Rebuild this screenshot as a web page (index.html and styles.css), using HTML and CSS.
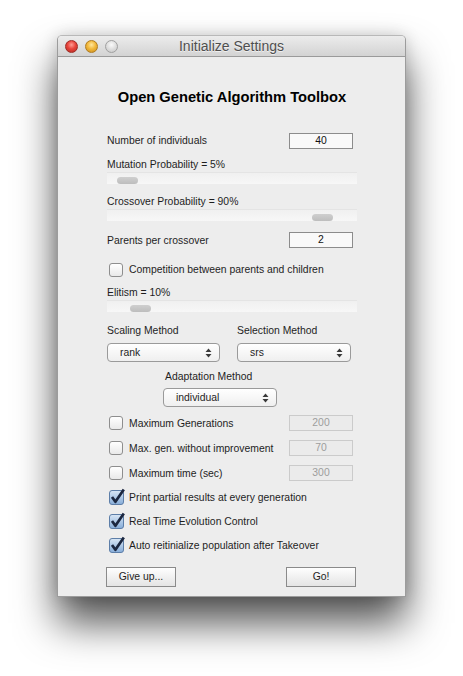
FILE: index.html
```html
<!DOCTYPE html>
<html>
<head>
<meta charset="utf-8">
<title>Initialize Settings</title>
<link rel="stylesheet" href="styles.css">
</head>
<body>
<div class="window">
  <div class="titlebar">
    <div class="lights">
      <span class="light red"></span>
      <span class="light yellow"></span>
      <span class="light gray"></span>
    </div>
    <div class="title">Initialize Settings</div>
    <div></div>
  </div>
  <div class="content">
    <h1 class="heading">Open Genetic Algorithm Toolbox</h1>

    <div class="field-row mt-26">
      <span class="label raised">Number of individuals</span>
      <div class="numbox">40</div>
    </div>

    <div class="label line mt-9">Mutation Probability = 5%</div>
    <div class="slider"><span class="knob" style="margin-left:10px"></span></div>

    <div class="label line mt-11">Crossover Probability = 90%</div>
    <div class="slider"><span class="knob" style="margin-left:205px"></span></div>

    <div class="field-row mt-11">
      <span class="label">Parents per crossover</span>
      <div class="numbox">2</div>
    </div>

    <div class="check-row mt-14">
      <span class="checkbox"></span>
      <span class="label raised">Competition between parents and children</span>
    </div>

    <div class="label line mt-8">Elitism = 10%</div>
    <div class="slider"><span class="knob" style="margin-left:23px"></span></div>

    <div class="methods mt-12">
      <div class="method">
        <div class="label line">Scaling Method</div>
        <div class="select"><span>rank</span>
          <svg class="arrows" width="7" height="10" viewBox="0 0 7 10"><path d="M3.5 0.5 L6.5 4 L0.5 4 Z M3.5 9.5 L6.5 6 L0.5 6 Z" fill="#3a3a3a"/></svg>
        </div>
      </div>
      <div class="method">
        <div class="label line">Selection Method</div>
        <div class="select"><span>srs</span>
          <svg class="arrows" width="7" height="10" viewBox="0 0 7 10"><path d="M3.5 0.5 L6.5 4 L0.5 4 Z M3.5 9.5 L6.5 6 L0.5 6 Z" fill="#3a3a3a"/></svg>
        </div>
      </div>
    </div>

    <div class="method adapt mt-8">
      <div class="label line indent">Adaptation Method</div>
      <div class="select"><span>individual</span>
        <svg class="arrows" width="7" height="10" viewBox="0 0 7 10"><path d="M3.5 0.5 L6.5 4 L0.5 4 Z M3.5 9.5 L6.5 6 L0.5 6 Z" fill="#3a3a3a"/></svg>
      </div>
    </div>

    <div class="field-row mt-8">
      <div class="check-row">
        <span class="checkbox"></span>
        <span class="label">Maximum Generations</span>
      </div>
      <div class="numbox disabled">200</div>
    </div>

    <div class="field-row mt-9">
      <div class="check-row">
        <span class="checkbox"></span>
        <span class="label">Max. gen. without improvement</span>
      </div>
      <div class="numbox disabled">70</div>
    </div>

    <div class="field-row mt-9">
      <div class="check-row">
        <span class="checkbox"></span>
        <span class="label">Maximum time (sec)</span>
      </div>
      <div class="numbox disabled">300</div>
    </div>

    <div class="check-row tall mt-9">
      <svg class="checked" width="16" height="16" viewBox="0 0 16 16"><defs><linearGradient id="cb1" x1="0" y1="0" x2="0" y2="1"><stop offset="0" stop-color="#d9e7f6"/><stop offset="1" stop-color="#86acd8"/></linearGradient></defs><rect x="0.5" y="1.5" width="14" height="14" rx="2.5" fill="url(#cb1)" stroke="#5d7ea8"/><path d="M3 8 L6.4 12.8 L14.8 0.4" fill="none" stroke="#1b2740" stroke-width="2.7" stroke-linejoin="round"/></svg>
      <span class="label">Print partial results at every generation</span>
    </div>

    <div class="check-row tall mt-8">
      <svg class="checked" width="16" height="16" viewBox="0 0 16 16"><defs><linearGradient id="cb2" x1="0" y1="0" x2="0" y2="1"><stop offset="0" stop-color="#d9e7f6"/><stop offset="1" stop-color="#86acd8"/></linearGradient></defs><rect x="0.5" y="1.5" width="14" height="14" rx="2.5" fill="url(#cb2)" stroke="#5d7ea8"/><path d="M3 8 L6.4 12.8 L14.8 0.4" fill="none" stroke="#1b2740" stroke-width="2.7" stroke-linejoin="round"/></svg>
      <span class="label">Real Time Evolution Control</span>
    </div>

    <div class="check-row tall mt-8">
      <svg class="checked" width="16" height="16" viewBox="0 0 16 16"><defs><linearGradient id="cb3" x1="0" y1="0" x2="0" y2="1"><stop offset="0" stop-color="#d9e7f6"/><stop offset="1" stop-color="#86acd8"/></linearGradient></defs><rect x="0.5" y="1.5" width="14" height="14" rx="2.5" fill="url(#cb3)" stroke="#5d7ea8"/><path d="M3 8 L6.4 12.8 L14.8 0.4" fill="none" stroke="#1b2740" stroke-width="2.7" stroke-linejoin="round"/></svg>
      <span class="label">Auto reitinialize population after Takeover</span>
    </div>

    <div class="buttons mt-13">
      <div class="button">Give up...</div>
      <div class="button">Go!</div>
    </div>
  </div>
</div>
</body>
</html>
```

FILE: styles.css
```css
* { box-sizing: border-box; }

html, body {
  margin: 0;
  padding: 0;
  background: #ffffff;
}

body {
  min-height: 676px;
  padding-top: 35px;
  font-family: "Liberation Sans", Arial, sans-serif;
  color: #1e1e1e;
}

.window {
  margin: 0 0 0 57px;
  width: 349px;
  border: 1px solid #9c9c9c;
  border-top-color: #b8b8b8;
  border-radius: 5px 5px 0 0;
  background: #ededed;
  box-shadow: 0 26px 40px 0 rgba(0, 0, 0, 0.68), 0 0 16px rgba(0, 0, 0, 0.16);
}

.titlebar {
  height: 21px;
  display: grid;
  grid-template-columns: 1fr auto 1fr;
  align-items: center;
  background: linear-gradient(#ececec, #d3d3d3);
  border-bottom: 1px solid #9a9a9a;
  border-radius: 4px 4px 0 0;
}

.lights {
  display: flex;
  gap: 7px;
  padding-left: 7px;
  padding-top: 1px;
}

.light {
  width: 13px;
  height: 13px;
  border-radius: 50%;
  display: block;
}

.light.red {
  background: radial-gradient(circle at 50% 35%, #ff9d95 0%, #e8453c 45%, #b32a22 100%);
  border: 1px solid #9e2b25;
}

.light.yellow {
  background: radial-gradient(circle at 50% 35%, #ffe7a0 0%, #f2b93c 45%, #c98b1c 100%);
  border: 1px solid #b07c1f;
}

.light.gray {
  background: radial-gradient(circle at 50% 35%, #fafafa 0%, #dedede 50%, #c2c2c2 100%);
  border: 1px solid #a0a0a0;
}

.title {
  font-size: 14px;
  color: #4f4f4f;
  line-height: 20px;
  text-shadow: 0 1px 0 rgba(255, 255, 255, 0.6);
}

.content {
  padding: 30px 48px 9px 49px;
  display: flex;
  flex-direction: column;
}

.heading {
  margin: 0;
  height: 20px;
  line-height: 20px;
  font-size: 14.7px;
  font-weight: bold;
  text-align: center;
  color: #000;
}

.label {
  font-size: 10.4px;
  color: #1e1e1e;
  white-space: nowrap;
}

.raised { margin-top: -2px; }

.line {
  height: 14px;
  line-height: 14px;
}

.indent { padding-left: 2px; }

.mt-7 { margin-top: 7px; }
.mt-8 { margin-top: 8px; }
.mt-9 { margin-top: 9px; }
.mt-11 { margin-top: 11px; }
.mt-12 { margin-top: 12px; }
.mt-13 { margin-top: 13px; }
.mt-14 { margin-top: 14px; }
.mt-26 { margin-top: 26px; }

.field-row {
  height: 16px;
  display: flex;
  justify-content: space-between;
  align-items: center;
}

.numbox {
  width: 64px;
  height: 16px;
  margin-right: 4px;
  border: 1px solid #8c8c8c;
  background: #f9f9f9;
  font-size: 10.4px;
  line-height: 14px;
  text-align: center;
  color: #111;
}

.numbox.disabled {
  border-color: #cbcbcb;
  background: #ebebeb;
  color: #9d9d9d;
}

.slider {
  height: 12px;
  padding-top: 4px;
  background: linear-gradient(#f0f0f0, #f7f7f7);
  border-top: 1px solid #e4e4e4;
}

.knob {
  display: block;
  width: 21px;
  height: 7px;
  border-radius: 4px;
  background: linear-gradient(#cfcfcf, #bdbdbd);
}

.check-row {
  height: 16px;
  display: flex;
  align-items: center;
  gap: 6px;
}

.checkbox {
  width: 14px;
  height: 14px;
  margin-left: 2px;
  border: 1px solid #8e8e8e;
  border-radius: 3px;
  background: linear-gradient(#ffffff, #e9e9e9);
  flex: none;
}

.checked {
  margin-left: 2px;
  margin-right: -2px;
  margin-top: -2px;
  overflow: visible;
  flex: none;
}

.check-row.tall .label { margin-top: -1px; }

.methods {
  display: grid;
  grid-template-columns: 130px 1fr;
}

.method {
  display: flex;
  flex-direction: column;
  gap: 5px;
}

.method.adapt {
  margin-left: 56px;
  gap: 4px;
}

.select {
  width: 114px;
  height: 19px;
  border: 1px solid #9a9a9a;
  border-radius: 4px;
  background: linear-gradient(#ffffff, #efefef);
  display: flex;
  align-items: center;
  justify-content: space-between;
  padding: 0 7px 0 12px;
  font-size: 10.4px;
  color: #1e1e1e;
}

.methods .method:first-child .select { width: 113px; }

.arrows { flex: none; }

.buttons {
  display: flex;
  justify-content: space-between;
  margin-left: -1px;
  margin-right: 1px;
}

.button {
  width: 70px;
  height: 20px;
  border: 1px solid #8a8a8a;
  background: linear-gradient(#fefefe, #e4e4e4);
  font-size: 10.4px;
  line-height: 17px;
  text-align: center;
  color: #1e1e1e;
}
```
